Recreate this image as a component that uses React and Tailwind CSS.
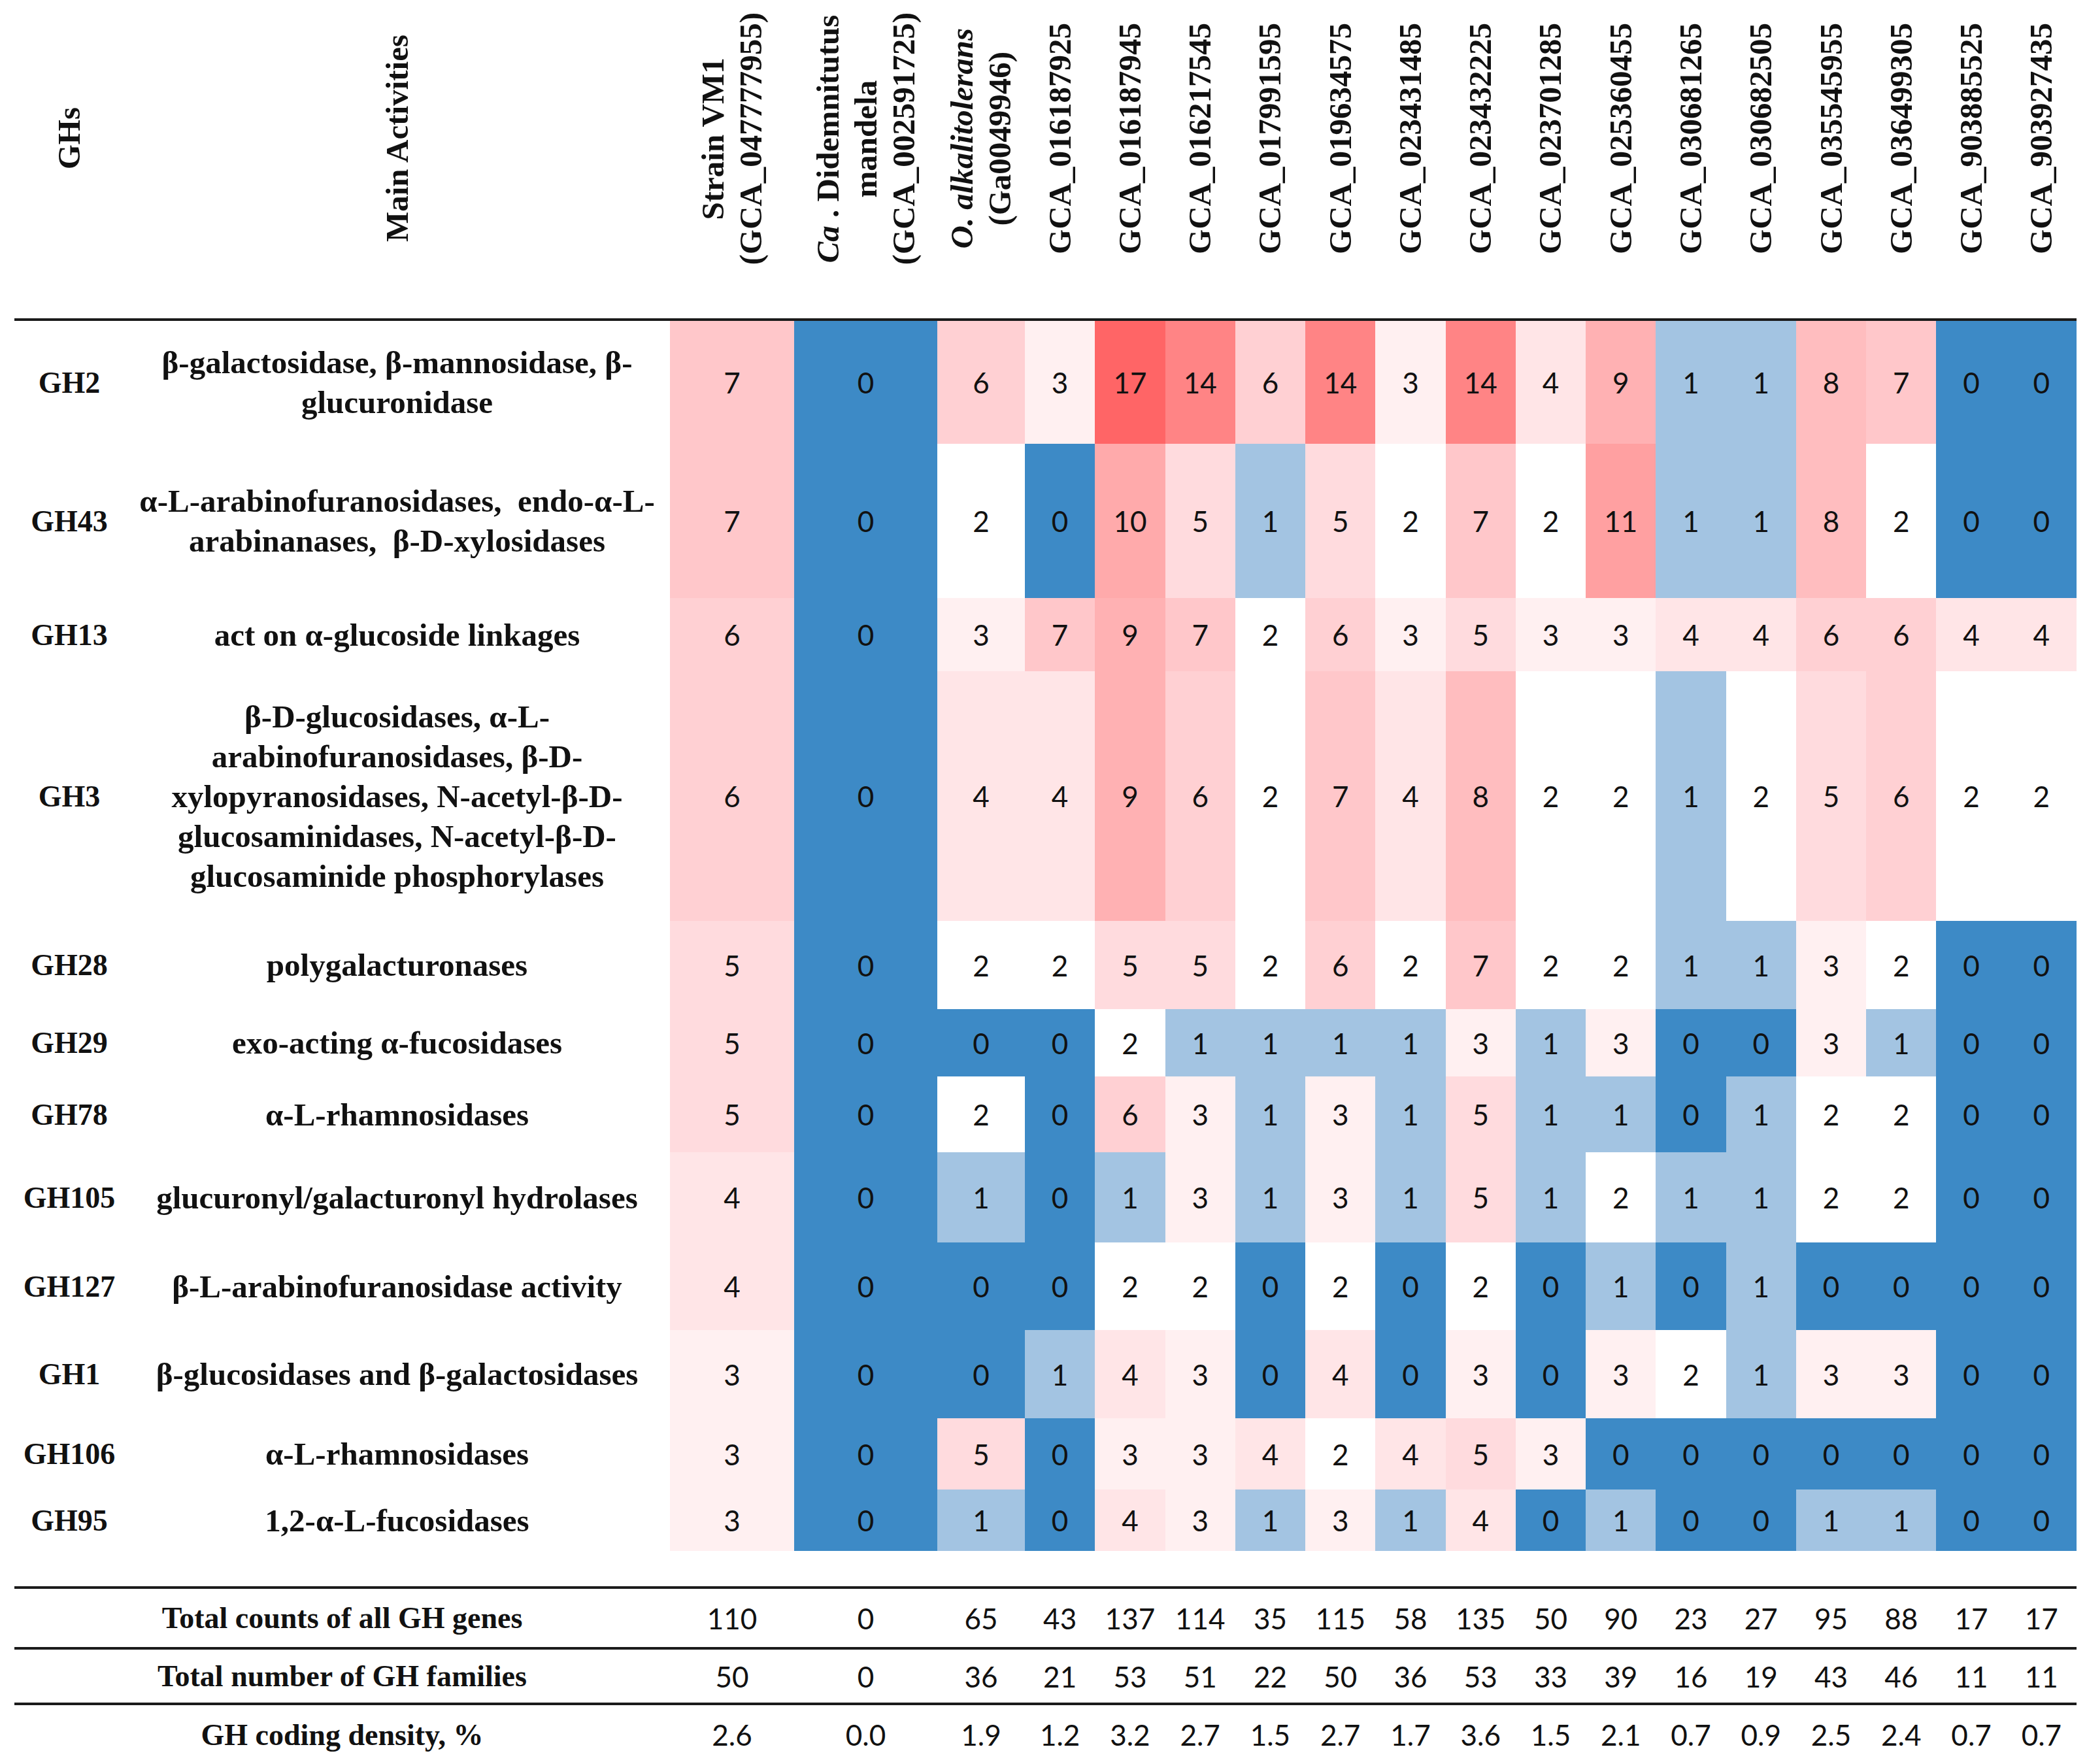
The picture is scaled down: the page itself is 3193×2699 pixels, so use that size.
import React from "react";

const COLS =
  "grid grid-cols-[168px_835px_190px_219px_134px_repeat(15,107.27px)]";

const BG = {
  0: "bg-[#3d8ac6]",
  1: "bg-[#a3c4e2]",
  2: "bg-[#ffffff]",
  3: "bg-[#fff0f1]",
  4: "bg-[#ffe5e7]",
  5: "bg-[#ffdbde]",
  6: "bg-[#ffd0d3]",
  7: "bg-[#ffc7ca]",
  8: "bg-[#ffbdbf]",
  9: "bg-[#ffb1b3]",
  10: "bg-[#ffaaab]",
  11: "bg-[#ffa0a1]",
  14: "bg-[#ff8485]",
  17: "bg-[#ff6566]",
};

const GCA = [
  "GCA_016187925",
  "GCA_016187945",
  "GCA_016217545",
  "GCA_017991595",
  "GCA_019634575",
  "GCA_023431485",
  "GCA_023432225",
  "GCA_023701285",
  "GCA_025360455",
  "GCA_030681265",
  "GCA_030682505",
  "GCA_035545955",
  "GCA_036499305",
  "GCA_903885525",
  "GCA_903927435",
];

const ROWS = [
  {
    gh: "GH2",
    h: "h-[188px]",
    act: ["β-galactosidase, β-mannosidase, β-", "glucuronidase"],
    v: [7, 0, 6, 3, 17, 14, 6, 14, 3, 14, 4, 9, 1, 1, 8, 7, 0, 0],
  },
  {
    gh: "GH43",
    h: "h-[236px]",
    act: ["α-L-arabinofuranosidases,  endo-α-L-", "arabinanases,  β-D-xylosidases"],
    v: [7, 0, 2, 0, 10, 5, 1, 5, 2, 7, 2, 11, 1, 1, 8, 2, 0, 0],
  },
  {
    gh: "GH13",
    h: "h-[112px]",
    act: ["act on α-glucoside linkages"],
    v: [6, 0, 3, 7, 9, 7, 2, 6, 3, 5, 3, 3, 4, 4, 6, 6, 4, 4],
  },
  {
    gh: "GH3",
    h: "h-[382px]",
    act: [
      "β-D-glucosidases, α-L-",
      "arabinofuranosidases, β-D-",
      "xylopyranosidases, N-acetyl-β-D-",
      "glucosaminidases, N-acetyl-β-D-",
      "glucosaminide phosphorylases",
    ],
    v: [6, 0, 4, 4, 9, 6, 2, 7, 4, 8, 2, 2, 1, 2, 5, 6, 2, 2],
  },
  {
    gh: "GH28",
    h: "h-[135px]",
    act: ["polygalacturonases"],
    v: [5, 0, 2, 2, 5, 5, 2, 6, 2, 7, 2, 2, 1, 1, 3, 2, 0, 0],
  },
  {
    gh: "GH29",
    h: "h-[103px]",
    act: ["exo-acting α-fucosidases"],
    v: [5, 0, 0, 0, 2, 1, 1, 1, 1, 3, 1, 3, 0, 0, 3, 1, 0, 0],
  },
  {
    gh: "GH78",
    h: "h-[116px]",
    act: ["α-L-rhamnosidases"],
    v: [5, 0, 2, 0, 6, 3, 1, 3, 1, 5, 1, 1, 0, 1, 2, 2, 0, 0],
  },
  {
    gh: "GH105",
    h: "h-[138px]",
    act: ["glucuronyl/galacturonyl hydrolases"],
    v: [4, 0, 1, 0, 1, 3, 1, 3, 1, 5, 1, 2, 1, 1, 2, 2, 0, 0],
  },
  {
    gh: "GH127",
    h: "h-[134px]",
    act: ["β-L-arabinofuranosidase activity"],
    v: [4, 0, 0, 0, 2, 2, 0, 2, 0, 2, 0, 1, 0, 1, 0, 0, 0, 0],
  },
  {
    gh: "GH1",
    h: "h-[135px]",
    act: ["β-glucosidases and β-galactosidases"],
    v: [3, 0, 0, 1, 4, 3, 0, 4, 0, 3, 0, 3, 2, 1, 3, 3, 0, 0],
  },
  {
    gh: "GH106",
    h: "h-[109px]",
    act: ["α-L-rhamnosidases"],
    v: [3, 0, 5, 0, 3, 3, 4, 2, 4, 5, 3, 0, 0, 0, 0, 0, 0, 0],
  },
  {
    gh: "GH95",
    h: "h-[94px]",
    act: ["1,2-α-L-fucosidases"],
    v: [3, 0, 1, 0, 4, 3, 1, 3, 1, 4, 0, 1, 0, 0, 1, 1, 0, 0],
  },
];

const TOTALS = [
  {
    label: "Total counts of all GH genes",
    h: "h-[89px]",
    v: ["110", "0", "65", "43", "137", "114", "35", "115", "58", "135", "50", "90", "23", "27", "95", "88", "17", "17"],
  },
  {
    label: "Total number of GH families",
    h: "h-[81px]",
    v: ["50", "0", "36", "21", "53", "51", "22", "50", "36", "53", "33", "39", "16", "19", "43", "46", "11", "11"],
  },
  {
    label: "GH coding density, %",
    h: "h-[90px]",
    v: ["2.6", "0.0", "1.9", "1.2", "3.2", "2.7", "1.5", "2.7", "1.7", "3.6", "1.5", "2.1", "0.7", "0.9", "2.5", "2.4", "0.7", "0.7"],
  },
];

const NUM = "font-['Lato','Open_Sans',sans-serif] text-[44px] font-normal text-[#111]";

function VHead({ lines }) {
  return (
    <div className="flex items-center justify-center h-full">
      <div className="[writing-mode:vertical-rl] rotate-180 text-center whitespace-nowrap font-bold text-[49px] leading-[58px] text-[#111]">
        {lines.map((l, i) => (
          <div key={i}>{l}</div>
        ))}
      </div>
    </div>
  );
}

function Line() {
  return <div className="h-[4px] bg-[#1b1b1b]" />;
}

export default function App() {
  return (
    <div className="w-[3193px] h-[2699px] bg-white overflow-hidden pl-[22px] pr-[16px] font-['Liberation_Serif','Times_New_Roman',serif] text-[#111]">
      {/* Header */}
      <div className={`${COLS} h-[424px]`}>
        <VHead lines={["GHs"]} />
        <VHead lines={["Main Activities"]} />
        <VHead lines={["Strain VM1", "(GCA_047777955)"]} />
        <VHead
          lines={[
            <span key="a">
              <i>Ca</i> . Didemnitutus
            </span>,
            "mandela",
            "(GCA_002591725)",
          ]}
        />
        <VHead lines={[<i key="o">O. alkalitolerans</i>, "(Ga0049946)"]} />
        {GCA.map((g) => (
          <VHead key={g} lines={[g]} />
        ))}
      </div>
      <div className="h-[63px]" />
      <Line />

      {/* Body */}
      {ROWS.map((r) => (
        <div key={r.gh} className={`${COLS} ${r.h}`}>
          <div className="flex items-center justify-center font-bold text-[46px]">
            {r.gh}
          </div>
          <div className="flex items-center justify-center">
            <div className="text-center whitespace-pre font-bold text-[49px] leading-[61px]">
              {r.act.map((a, i) => (
                <div key={i}>{a}</div>
              ))}
            </div>
          </div>
          {r.v.map((v, i) => (
            <div
              key={i}
              className={`flex items-center justify-center ${BG[v]} ${NUM}`}
            >
              {v}
            </div>
          ))}
        </div>
      ))}

      <div className="h-[54px]" />
      <Line />
      {TOTALS.map((t, ti) => (
        <React.Fragment key={t.label}>
          <div className={`${COLS} ${t.h}`}>
            <div className="col-span-2 flex items-center justify-center">
              <div className="text-center font-bold text-[46px] whitespace-nowrap">
                {t.label}
              </div>
            </div>
            {t.v.map((v, i) => (
              <div key={i} className={`flex items-center justify-center ${NUM}`}>
                {v}
              </div>
            ))}
          </div>
          {ti < 2 && <Line />}
        </React.Fragment>
      ))}
    </div>
  );
}
